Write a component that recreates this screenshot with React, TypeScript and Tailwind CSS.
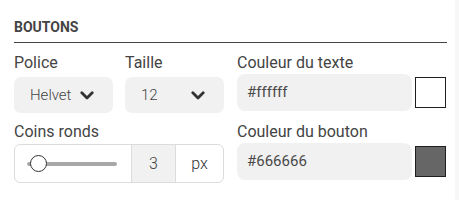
function Chevron() {
  return (
    <svg width="14" height="9" viewBox="0 0 14 9" className="shrink-0">
      <polyline points="1.8,1.8 7,7 12.2,1.8" fill="none" stroke="#333" strokeWidth="2.8" strokeLinecap="round" strokeLinejoin="round" />
    </svg>
  );
}

function SelectField({ label, value }: { label: string; value: string }) {
  return (
    <div>
      <div className="mb-[4px] text-[16px] leading-5">{label}</div>
      <div className="relative flex h-[36px] items-center rounded-[7px] bg-[#f1f1f1] pl-[16px] text-[15px] font-light text-[#444]">
        <span>{value}</span>
        <span className="absolute right-[19px] top-[13.5px] flex">
          <Chevron />
        </span>
      </div>
    </div>
  );
}

function ColorField({ label, value, swatch, className }: { label: string; value: string; swatch: string; className?: string }) {
  return (
    <div className={className}>
      <div className="text-[16px] leading-5">{label}</div>
      <div className="mt-[1px] flex items-center gap-[3px]">
        <div className="flex h-[37px] w-[175px] items-center rounded-[8px] bg-[#f1f1f1] pl-[10px] text-[15px] text-[#4a4a4a]">
          {value}
        </div>
        <div className="h-[31px] w-[31px] border-[1.5px] border-[#1e1e1e]" style={{ backgroundColor: swatch }} />
      </div>
    </div>
  );
}

export default function App() {
  return (
    <div className="flex h-[200px] w-[459px] bg-white font-['Roboto',sans-serif] text-[#444]">
      <div className="w-[455px] pl-[14px] pr-[8px]">
        <div className="border-b border-[#444] pb-[7px] pt-[19px] text-[14px] font-bold leading-4">BOUTONS</div>

        <div className="mt-[10px] flex gap-[13px]">
          {/* Police / Taille / Coins ronds */}
          <div className="w-[210px]">
            <div className="grid grid-cols-2 gap-x-[12px]">
              <SelectField label="Police" value="Helvet" />
              <SelectField label="Taille" value="12" />
            </div>
            <div className="mt-[9px] text-[16px] leading-5">Coins ronds</div>
            <div className="mt-[2px] flex h-[39px] overflow-hidden rounded-[6px] border border-[#dcdcdc]">
              <div className="relative flex flex-1 items-center pl-[12px] pr-[14px]">
                <div className="h-[4px] w-full rounded-full bg-[#a8a8a8]" />
                <div className="absolute left-[15px] top-[10px] h-[17px] w-[17px] rounded-full border border-[#333] bg-white" />
              </div>
              <div className="flex w-[44px] items-center justify-center border-l border-[#dcdcdc] bg-[#f1f1f1] text-[16px] font-light text-[#444]">
                3
              </div>
              <div className="flex w-[48px] items-center justify-center border-l border-[#dcdcdc] text-[16px] font-light text-[#333]">
                px
              </div>
            </div>
          </div>

          {/* Couleurs */}
          <div className="w-[210px]">
            <ColorField label="Couleur du texte" value="#ffffff" swatch="#ffffff" />
            <ColorField className="mt-[11px]" label="Couleur du bouton" value="#666666" swatch="#666666" />
          </div>
        </div>
      </div>
      <div className="flex-1 bg-[#f7f7f7]" />
    </div>
  );
}
